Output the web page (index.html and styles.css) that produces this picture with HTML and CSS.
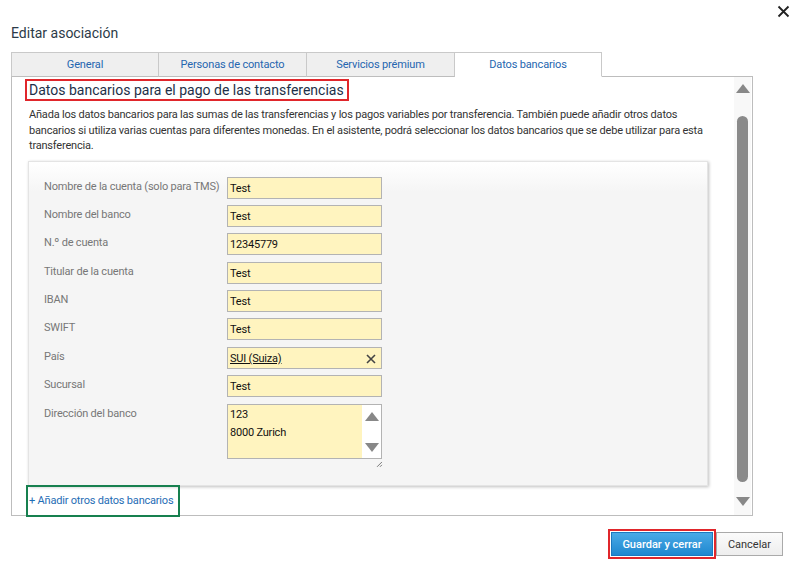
FILE: index.html
```html
<!DOCTYPE html>
<html lang="es">
<head>
<meta charset="utf-8">
<title>Editar asociación</title>
<link rel="stylesheet" href="styles.css">
</head>
<body>
<div class="dialog">
  <div class="topbar">
    <span class="close">
      <svg width="13" height="13" viewBox="0 0 13 13"><path d="M1.5 1.5L11.5 11.5M11.5 1.5L1.5 11.5" stroke="#222" stroke-width="1.8" fill="none"/></svg>
    </span>
  </div>
  <h1 class="title">Editar asociación</h1>
  <div class="tabs">
    <div class="tab">General</div>
    <div class="tab">Personas de contacto</div>
    <div class="tab">Servicios prémium</div>
    <div class="tab active">Datos bancarios</div>
  </div>
  <div class="panel">
    <div class="content">
      <h2 class="heading">Datos bancarios para el pago de las transferencias</h2>
      <p class="intro">Añada los datos bancarios para las sumas de las transferencias y los pagos variables por transferencia. También puede añadir otros datos bancarios si utiliza varias cuentas para diferentes monedas. En el asistente, podrá seleccionar los datos bancarios que se debe utilizar para esta transferencia.</p>
      <div class="card">
        <div class="row"><label class="lbl">Nombre de la cuenta (solo para TMS)</label><div class="inp">Test</div></div>
        <div class="row"><label class="lbl">Nombre del banco</label><div class="inp">Test</div></div>
        <div class="row"><label class="lbl">N.º de cuenta</label><div class="inp">12345779</div></div>
        <div class="row"><label class="lbl">Titular de la cuenta</label><div class="inp">Test</div></div>
        <div class="row"><label class="lbl">IBAN</label><div class="inp">Test</div></div>
        <div class="row"><label class="lbl">SWIFT</label><div class="inp">Test</div></div>
        <div class="row"><label class="lbl">País</label><div class="inp sel"><span class="selv">SUI (Suiza)</span><svg class="clr" width="10" height="10" viewBox="0 0 10 10"><path d="M1 1L9 9M9 1L1 9" stroke="#444" stroke-width="1.6" fill="none"/></svg></div></div>
        <div class="row"><label class="lbl">Sucursal</label><div class="inp">Test</div></div>
        <div class="row tall"><label class="lbl">Dirección del banco</label>
          <div class="areawrap">
            <div class="area">
              <div class="areatext">123<br>8000 Zurich</div>
              <div class="areascroll">
                <svg width="14" height="9" viewBox="0 0 14 9"><path d="M7 0L14 9H0Z" fill="#888"/></svg>
                <svg width="14" height="9" viewBox="0 0 14 9"><path d="M0 0H14L7 9Z" fill="#888"/></svg>
              </div>
            </div>
            <svg class="grip" width="7" height="7" viewBox="0 0 7 7"><path d="M6 1L1 6M6 4L4 6" stroke="#777" stroke-width="1" fill="none"/></svg>
          </div>
        </div>
      </div>
      <div class="addwrap"><a class="add" href="#">+ Añadir otros datos bancarios</a></div>
    </div>
    <div class="vscroll">
      <svg width="14" height="9" viewBox="0 0 14 9"><path d="M7 0L14 9H0Z" fill="#888"/></svg>
      <div class="thumb"></div>
      <svg width="14" height="9" viewBox="0 0 14 9"><path d="M0 0H14L7 9Z" fill="#888"/></svg>
    </div>
  </div>
  <div class="footer">
    <button class="btn primary">Guardar y cerrar</button>
    <button class="btn">Cancelar</button>
  </div>
</div>
</body>
</html>
```
FILE: styles.css
```css
* { box-sizing: border-box; }
html, body { margin: 0; padding: 0; background: #fff; }
body { font-family: Roboto, "Liberation Sans", Arial, sans-serif; color: #333; }
.dialog { width: 796px; height: 567px; padding: 0 14px 0 11px; display: flex; flex-direction: column; }
.topbar { height: 23px; display: flex; justify-content: flex-end; align-items: flex-end; }
.close { display: block; width: 13px; height: 13px; margin-bottom: 5px; margin-right: -8px; }
.close svg { display: block; }
.title { margin: 0; font-size: 14px; font-weight: 400; line-height: 20px; color: #2c3a48; height: 29px; }
.tabs { display: flex; height: 25px; position: relative; z-index: 1; }
.tab { width: 147px; height: 25px; border: 1px solid #c9c9c9; border-bottom: 1px solid #bdbdbd; border-right-width: 0; background: #efefef; color: #2566b0; font-size: 11px; letter-spacing: -0.15px; display: flex; align-items: center; justify-content: center; }
.tab:nth-child(1) { width: 147px; }
.tab:nth-child(2), .tab:nth-child(3) { width: 148px; }
.tab:nth-child(3) { border-right-width: 1px; width: 149px; }
.tab.active { width: 147px; background: #fff; border: 1px solid #c9c9c9; border-bottom-color: #fff; border-left: none; }
.panel { width: 742px; height: 440px; margin-top: -1px; border: 1px solid #bdbdbd; display: flex; }
.content { flex: 1; padding: 2px 0 0 13px; min-width: 0; }
.heading { display: inline-block; margin: 0; border: 2px solid #e0262b; padding: 0 3px 0 2px; font-size: 14px; font-weight: 400; line-height: 18px; color: #1d2f48; }
.intro { margin: 6px 0 0 4px; width: 684px; font-size: 11px; letter-spacing: -0.2px; line-height: 15.5px; color: #333; }
.card { margin: 7px 0 0 3px; width: 680px; height: 325px; background: linear-gradient(#ffffff, #f5f5f5 30px, #f5f5f5); border: 1px solid #e4e4e4; box-shadow: 1px 1px 3px rgba(0,0,0,0.25); padding: 15px 0 0 15px; display: flex; flex-direction: column; gap: 6.4px; }
.row { display: flex; height: 22px; }
.row.tall { height: 64px; }
.lbl { width: 183px; font-size: 11px; letter-spacing: -0.2px; color: #777; padding-top: 3px; white-space: nowrap; }
.inp { width: 155px; height: 22px; border: 1px solid #b3b3b3; background: #fff4bf; font-size: 11px; letter-spacing: -0.2px; color: #111; padding: 4px 0 0 2px; }
.sel { display: flex; justify-content: space-between; }
.selv { text-decoration: underline; }
.clr { margin: 2px 5px 0 0; }
.areawrap { width: 155px; display: flex; flex-direction: column; align-items: flex-end; }
.area { width: 155px; height: 57px; border: 1px solid #b3b3b3; background: #fff4bf; display: flex; }
.areatext { flex: 1; font-size: 11px; letter-spacing: -0.2px; color: #111; line-height: 18px; padding: 1px 0 0 2px; }
.areascroll { width: 19px; background: #fff; display: flex; flex-direction: column; justify-content: space-between; align-items: center; padding: 7px 0 6px; }
.areascroll svg { display: block; }
.grip { margin-top: 2px; margin-right: -1px; }
.addwrap { margin: -1px 0 0 1px; width: 154px; height: 32px; border: 2px solid #17804f; display: flex; align-items: center; padding-left: 1px; }
.add { font-size: 11px; letter-spacing: -0.2px; color: #1f6db5; text-decoration: none; white-space: nowrap; }
.vscroll { width: 17px; margin: 0 1px 0 0; background: #f8f8f8; display: flex; flex-direction: column; align-items: center; padding: 7px 0 4px; }
.vscroll svg { display: block; flex: none; }
.thumb { width: 11px; height: 366px; margin: 23px 0 15px; background: #8a8a8a; border-radius: 6px; }
.footer { display: flex; justify-content: flex-end; margin-top: 16px; gap: 3px; }
.btn { height: 24px; font-family: Roboto, "Liberation Sans", Arial, sans-serif; font-size: 11px; padding: 0 10px; border: 1px solid #aaa; background: linear-gradient(#fbfbfb, #eeeeee); color: #333; }
.btn.primary { width: 102px; border: 1px solid #1b78bf; background: linear-gradient(#49aae6, #1f87cf); color: #fff; font-weight: 500; outline: 2px solid #e0262b; outline-offset: 1px; padding: 0; }
.btn:last-child { width: 67px; margin-right: -1px; }
```
